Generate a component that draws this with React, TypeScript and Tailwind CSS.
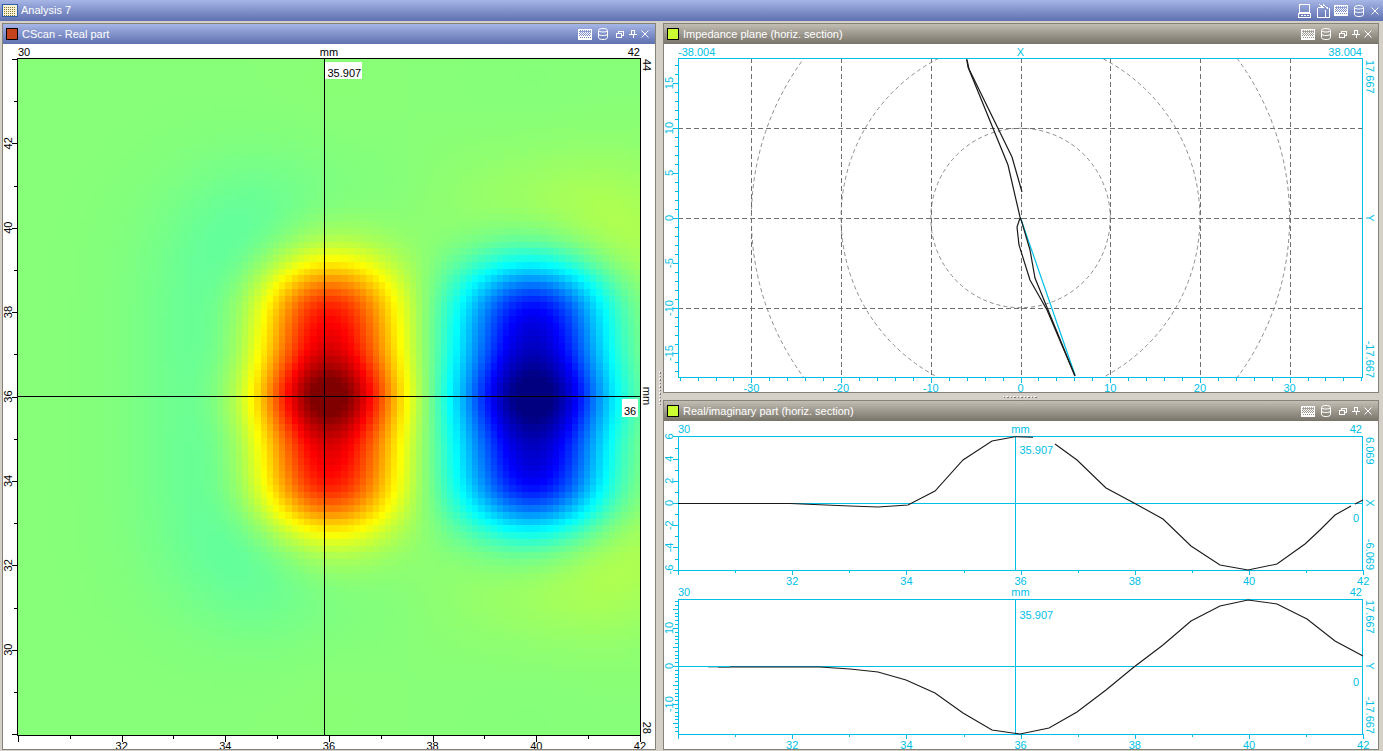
import { useMemo } from 'react'
import type { ReactNode } from 'react'

const CYAN = '#00bfe6'

const clamp = (n: number) => Math.max(0, Math.min(1, n))

// jet colour map, t in 0..1
function jet(t: number) {
  const r = clamp(1.5 - Math.abs(4 * t - 3))
  const g = clamp(1.5 - Math.abs(4 * t - 2))
  const b = clamp(1.5 - Math.abs(4 * t - 1))
  return `rgb(${Math.round(r * 255)},${Math.round(g * 255)},${Math.round(b * 255)})`
}

function lobe(dx: number, dy: number, sx: number, amp: number, coreAmp: number) {
  const gx = Math.exp(-(dx * dx) / (2 * sx * sx))
  const plateau = amp / (1 + Math.pow(Math.abs(dy) / 3.05, 6))
  const core = coreAmp * Math.exp(-(dy * dy) / (2 * 0.62 * 0.62))
  return gx * (plateau + core)
}

// faint opposite sign ring round each lobe, gone well before the plot edges
function halo(dx: number, dy: number, amp: number) {
  return amp * Math.exp(-(dx * dx) / (2 * 1.5 * 1.5) - Math.pow(Math.abs(dy) / 5, 4))
}

function field(x: number, y: number) {
  return (
    0.015 +
    lobe(x - 35.95, y - 36, 0.98, 0.94, 0.28) -
    lobe(x - 40, y - 36, 1.08, 1.12, 0.22) -
    halo(x - 35.3, y - 36, 0.2) +
    halo(x - 40.4, y - 36, 0.28)
  )
}

function Heatmap() {
  const cells = useMemo(() => {
    const out: { key: number; x: number; y: number; fill: string }[] = []
    for (let j = 0; j < 100; j++) {
      for (let i = 0; i < 100; i++) {
        const x = 30 + (i + 0.5) * 0.12
        const y = 44 - (j + 0.5) * 0.16
        out.push({ key: j * 100 + i, x: 18 + i * 6.22, y: 59 + j * 6.76, fill: jet(clamp(0.5 + field(x, y) / 2)) })
      }
    }
    return out
  }, [])
  return (
    <g shapeRendering="crispEdges">
      {cells.map((c) => (
        <rect key={c.key} x={c.x} y={c.y} width={6.8} height={7.3} fill={c.fill} />
      ))}
    </g>
  )
}

// rotated label, dir 1 reads top to bottom, -1 bottom to top
function VText({ x, y, dir, anchor, fill, children }: { x: number; y: number; dir: 1 | -1; anchor?: 'start' | 'middle' | 'end'; fill: string; children: ReactNode }) {
  return (
    <text transform={`translate(${x} ${y}) rotate(${dir * 90})`} textAnchor={anchor ?? 'middle'} fill={fill} className="text-[11px]">
      {children}
    </text>
  )
}

function HText({ x, y, anchor, fill, children }: { x: number; y: number; anchor?: 'start' | 'middle' | 'end'; fill: string; children: ReactNode }) {
  return (
    <text x={x} y={y} textAnchor={anchor ?? 'start'} fill={fill} className="text-[11px]">
      {children}
    </text>
  )
}

const range = (a: number, b: number, step = 1) => {
  const out: number[] = []
  for (let v = a; v <= b; v += step) out.push(v)
  return out
}

function CScan() {
  const px = (mm: number) => 18 + (mm - 30) * 51.83
  const py = (mm: number) => 396.5 - (mm - 36) * 42.2
  return (
    <svg width={652} height={705} viewBox="3 44 652 705" className="block">
      <Heatmap />
      <rect x={17.5} y={58.5} width={623} height={677} fill="none" stroke="#000" />
      <g stroke="#000" shapeRendering="crispEdges">
        {range(30, 42).map((m) => (
          <line key={m} x1={Math.round(px(m)) + 0.5} x2={Math.round(px(m)) + 0.5} y1={736} y2={m % 2 ? 739 : 742} />
        ))}
        {range(28, 44).map((m) => (
          <line key={m} y1={Math.round(py(m)) + 0.5} y2={Math.round(py(m)) + 0.5} x1={m % 2 ? 14 : 12} x2={17} />
        ))}
        <line x1={324.5} x2={324.5} y1={59} y2={735} />
        <line x1={18} x2={640} y1={396.5} y2={396.5} />
      </g>
      <HText x={18} y={56} fill="#000">30</HText>
      <HText x={329} y={56} anchor="middle" fill="#000">mm</HText>
      <HText x={640} y={56} anchor="end" fill="#000">42</HText>
      {[32, 34, 36, 38, 40, 42].map((m) => (
        <HText key={m} x={px(m)} y={750} anchor="middle" fill="#000">{m}</HText>
      ))}
      {[30, 32, 34, 36, 38, 40, 42].map((m) => (
        <VText key={m} x={12} y={py(m)} dir={-1} fill="#000">{m}</VText>
      ))}
      <VText x={643} y={59} dir={1} anchor="start" fill="#000">44</VText>
      <VText x={643} y={396} dir={1} fill="#000">mm</VText>
      <VText x={643} y={734} dir={1} anchor="end" fill="#000">28</VText>
      <rect x={325} y={62} width={37} height={17} fill="#fff" />
      <HText x={327.5} y={77} fill="#000">35.907</HText>
      <rect x={622} y={399} width={16} height={18} fill="#fff" />
      <HText x={630} y={415} anchor="middle" fill="#000">36</HText>
    </svg>
  )
}

function ImpedancePlane() {
  const x = (u: number) => 1020.5 + u * 8.97
  const y = (u: number) => 218 - u * 9
  return (
    <svg width={715} height={348} viewBox="664 44 715 348" className="block">
      <defs>
        <clipPath id="plane">
          <rect x={678} y={58} width={685} height={320} />
        </clipPath>
      </defs>
      <g clipPath="url(#plane)" fill="none">
        <g stroke="#8c8c8c" strokeDasharray="4 3">
          <circle cx={1020.5} cy={218} r={89.7} />
          <circle cx={1020.5} cy={218} r={179.4} />
          <circle cx={1020.5} cy={218} r={269.1} />
        </g>
        <g stroke="#707070" strokeDasharray="5 3" shapeRendering="crispEdges">
          {[-30, -20, -10, 0, 10, 20, 30].map((u) => (
            <line key={u} x1={Math.round(x(u)) + 0.5} x2={Math.round(x(u)) + 0.5} y1={58} y2={378} />
          ))}
          {[-10, 0, 10].map((u) => (
            <line key={u} y1={Math.round(y(u)) + 0.5} y2={Math.round(y(u)) + 0.5} x1={678} x2={1363} />
          ))}
        </g>
        <polyline points="1020.5,218 1075,375" stroke={CYAN} strokeWidth={1.2} />
        <g stroke="#1a1a1a" strokeWidth={1.2}>
          <polyline points="966.5,58 968,67 1008,165 1020,217 1021.5,221 1030,250 1035,278 1075,376" />
          <polyline points="967,60 969,69 1012,157 1022,192" />
          <polyline points="1020,218 1017,227 1019,245 1030,280 1047,310 1075,376" />
        </g>
      </g>
      <rect x={678.5} y={58.5} width={684} height={319} fill="none" stroke={CYAN} />
      <g stroke={CYAN} shapeRendering="crispEdges">
        {range(-38, 38, 2).map((u) => (
          <line key={u} x1={Math.round(x(u)) + 0.5} x2={Math.round(x(u)) + 0.5} y1={378} y2={u % 10 ? 381 : 383} />
        ))}
        {range(-17, 17).map((u) => (
          <line key={u} y1={Math.round(y(u)) + 0.5} y2={Math.round(y(u)) + 0.5} x1={u % 5 ? 675 : 673} x2={678} />
        ))}
      </g>
      <HText x={678} y={55.5} fill={CYAN}>-38.004</HText>
      <HText x={1020.5} y={55.5} anchor="middle" fill={CYAN}>X</HText>
      <HText x={1362} y={55.5} anchor="end" fill={CYAN}>38.004</HText>
      {[-30, -20, -10, 0, 10, 20, 30].map((u) => (
        <HText key={u} x={x(u)} y={392} anchor="middle" fill={CYAN}>{u}</HText>
      ))}
      {[-15, -10, -5, 0, 5, 10, 15].map((u) => (
        <VText key={u} x={673} y={y(u)} dir={-1} fill={CYAN}>{u}</VText>
      ))}
      <VText x={1366} y={60} dir={1} anchor="start" fill={CYAN}>17.667</VText>
      <VText x={1366} y={218} dir={1} fill={CYAN}>Y</VText>
      <VText x={1366} y={378} dir={1} anchor="end" fill={CYAN}>-17.667</VText>
    </svg>
  )
}

type SectionProps = {
  top: number
  bottom: number
  center: number
  unit: number
  ticks: number
  majorEvery: number
  labels: number[]
  curves: string[]
  axis: string
  max: string
  tagY: number
  zeroY: number
}

function Section({ top, bottom, center, unit, ticks, majorEvery, labels, curves, axis, max, tagY, zeroY }: SectionProps) {
  const x = (mm: number) => 678 + (mm - 30) * 57.1
  const y = (u: number) => center - u * unit
  const base = bottom + 15
  return (
    <g>
      <rect x={678.5} y={top + 0.5} width={684} height={bottom - top} fill="none" stroke={CYAN} shapeRendering="crispEdges" />
      <g stroke={CYAN} shapeRendering="crispEdges">
        <line x1={678} x2={1363} y1={center + 0.5} y2={center + 0.5} />
        <line x1={1015.5} x2={1015.5} y1={top} y2={bottom} />
        {range(30, 42).map((m) => (
          <line key={m} x1={Math.round(x(m)) + 0.5} x2={Math.round(x(m)) + 0.5} y1={bottom} y2={m % 2 ? bottom + 3 : bottom + 5} />
        ))}
        {range(-ticks, ticks).map((u) => (
          <line key={u} y1={Math.round(y(u)) + 0.5} y2={Math.round(y(u)) + 0.5} x1={u % majorEvery ? 675 : 673} x2={678} />
        ))}
      </g>
      <g fill="none" stroke="#1a1a1a" strokeWidth={1.1}>
        {curves.map((c) => (
          <polyline key={c} points={c} />
        ))}
      </g>
      <HText x={678} y={top - 3} fill={CYAN}>30</HText>
      <HText x={1020.5} y={top - 3} anchor="middle" fill={CYAN}>mm</HText>
      <HText x={1362} y={top - 3} anchor="end" fill={CYAN}>42</HText>
      {[32, 34, 36, 38, 40, 42].map((m) => (
        <HText key={m} x={x(m)} y={base} anchor="middle" fill={CYAN}>{m}</HText>
      ))}
      {labels.map((u) => (
        <VText key={u} x={673} y={y(u)} dir={-1} fill={CYAN}>{u}</VText>
      ))}
      <HText x={1019.5} y={tagY} fill={CYAN}>35.907</HText>
      <HText x={1353} y={zeroY} fill={CYAN}>0</HText>
      <VText x={1366} y={top + 1} dir={1} anchor="start" fill={CYAN}>{max}</VText>
      <VText x={1366} y={center} dir={1} fill={CYAN}>{axis}</VText>
      <VText x={1366} y={bottom} dir={1} anchor="end" fill={CYAN}>-{max}</VText>
    </g>
  )
}

function Sections() {
  return (
    <svg width={715} height={328} viewBox="664 421 715 328" className="block">
      <Section
        top={436}
        bottom={570}
        center={503}
        unit={11.1}
        ticks={6}
        majorEvery={2}
        labels={[-6, -4, -2, 0, 2, 4, 6]}
        axis="X"
        max="6.069"
        tagY={454}
        zeroY={522}
        curves={[
          '678,503.5 790,503.5 850,506 878,507 908,505 935,491 963,460 992,441 1015,436.7 1033,437.3',
          '1055,444 1077,460 1106,488 1134,503 1163,519 1191,546 1220,565 1248,570 1277,564 1305,544 1320,530 1335,515 1351,506',
          '1355,504 1363,500',
        ]}
      />
      <Section
        top={599}
        bottom={734}
        center={666}
        unit={3.81}
        ticks={17}
        majorEvery={5}
        labels={[-10, 0, 10]}
        axis="Y"
        max="17.667"
        tagY={619}
        zeroY={686}
        curves={[
          '730,667 820,667 850,669 878,672 906,680 935,693 963,713 992,730 1020,734 1049,728 1077,712 1106,690 1134,667 1163,645 1191,621 1220,606 1248,600 1277,604 1307,619 1335,641 1363,656',
        ]}
      />
      {/* the lower curve fades in from the left */}
      <line x1={708} x2={718} y1={667.5} y2={667.5} stroke="#bdbdbd" />
      <line x1={718} x2={730} y1={667.5} y2={667.5} stroke="#6e6e6e" />
    </svg>
  )
}

// dithered thumbnail, thin at the top and nearly solid at the bottom
function PictureIcon() {
  const dots: { x: number; y: number }[] = []
  for (let r = 0; r < 9; r++) {
    for (let c = 0; c < 12; c++) {
      const on = r < 3 ? r % 2 === 0 && c % 2 === 0 : r < 6 ? (r + c) % 2 === 0 : r % 2 === 0 || c % 2 === 0
      if (on) dots.push({ x: c + 1, y: r + 1 })
    }
  }
  return (
    <svg width={14} height={11} viewBox="0 0 14 11" className="block" shapeRendering="crispEdges">
      <rect x={0.5} y={0.5} width={13} height={10} fill="none" stroke="#fff" />
      {dots.map((d) => (
        <rect key={`${d.x}-${d.y}`} x={d.x} y={d.y} width={1} height={1} fill="#fff" />
      ))}
    </svg>
  )
}

function DbIcon() {
  return (
    <svg width={10} height={12} viewBox="0 0 10 12" fill="none" stroke="#fff" className="block">
      <path d="M0.5 2.5c0-2.7 9-2.7 9 0v7c0 2.7-9 2.7-9 0z" />
      <path d="M0.5 2.5c0 2 9 2 9 0M0.5 6c0 2 9 2 9 0" />
    </svg>
  )
}

function CloseIcon() {
  return (
    <svg width={8} height={8} viewBox="0 0 8 8" fill="none" stroke="#fff" className="block">
      <path d="M0.5 0.5l7 7M7.5 0.5l-7 7" />
    </svg>
  )
}

function Panel({ title, swatch, blue, children, className }: { title: string; swatch: string; blue?: boolean; children: ReactNode; className?: string }) {
  return (
    <div className={`flex flex-col border border-[#85827a] bg-white ${className ?? ''}`}>
      <div
        className={`flex h-5 shrink-0 items-center bg-linear-to-b pl-[3px] pr-[6px] text-[11px] text-white ${
          blue ? 'from-[#a6b6e6] to-[#5f70b0]' : 'from-[#c2beb4] to-[#78746a]'
        }`}
      >
        <span className={`mr-1 block size-[12px] border border-black ${swatch}`} />
        <span>{title}</span>
        <div className="ml-auto flex items-center">
          <PictureIcon />
          <span className="ml-[6px]">
            <DbIcon />
          </span>
          <svg width={8} height={7} viewBox="0 0 8 7" fill="none" stroke="#fff" className="ml-2 block" shapeRendering="crispEdges">
            <rect x={0.5} y={2.5} width={5} height={4} />
            <path d="M2.5 2.5v-2h5v4h-2" />
          </svg>
          <svg width={8} height={8} viewBox="0 0 8 8" fill="none" stroke="#fff" className="ml-[5px] block" shapeRendering="crispEdges">
            <path d="M2.5 0.5h3v4h-3zM0 4.5h8M4 4.5v3.5" />
          </svg>
          <span className="ml-1">
            <CloseIcon />
          </span>
        </div>
      </div>
      <div className="min-h-0 flex-1 overflow-hidden">{children}</div>
    </div>
  )
}

function Grip({ vertical }: { vertical?: boolean }) {
  return (
    <div className={vertical ? 'flex flex-col gap-[2px]' : 'flex gap-[2px]'}>
      {range(1, 10).map((n) => (
        <span key={n} className="block size-[1.5px] bg-[#fff] shadow-[1px_1px_0_#777]" />
      ))}
    </div>
  )
}

export default function App() {
  return (
    <div className="flex h-[751px] w-[1383px] flex-col overflow-hidden bg-[#d4d0c8] font-['Liberation_Sans',Arial,sans-serif]">
      <div className="flex h-[21px] shrink-0 items-center bg-linear-to-b from-[#a6b6e6] to-[#5f70b0] pl-[2px] pr-1 text-[11px] text-white">
        <svg width={16} height={13} viewBox="0 0 16 13" className="mr-[3px] block" shapeRendering="crispEdges">
          <rect x={0.5} y={0.5} width={15} height={12} fill="#f7f1d8" stroke="#2f5ea8" />
          <path d="M2 3h12M2 5h12M2 7h12M2 9h12M2 11h12" stroke="#8a7a30" strokeDasharray="1 1" />
        </svg>
        <span>Analysis 7</span>
        <div className="ml-auto flex items-center">
          <svg width={13} height={14} viewBox="0 0 13 14" fill="none" stroke="#fff" className="block" shapeRendering="crispEdges">
            <rect x={1.5} y={0.5} width={10} height={8} />
            <rect x={0.5} y={9.5} width={12} height={4} />
            <path d="M3 11.5h2M6 11.5h2M9 11.5h2" />
          </svg>
          <svg width={13} height={14} viewBox="0 0 13 14" fill="none" stroke="#fff" className="ml-[6px] block" shapeRendering="crispEdges">
            <path d="M0.5 3.5h5M8.5 5.5v8h-8v-10M12.5 3.5v10h-4M2 0.5l5 3M6 0.5l5 4" />
          </svg>
          <span className="ml-1">
            <PictureIcon />
          </span>
          <span className="ml-[6px]">
            <DbIcon />
          </span>
          <span className="ml-[7px]">
            <CloseIcon />
          </span>
        </div>
      </div>
      <div className="flex min-h-0 flex-1 pb-px pl-[2px] pr-1 pt-[2px]">
        <Panel title="CScan - Real part" swatch="bg-[#c4421c]" blue className="w-[654px]">
          <CScan />
        </Panel>
        <div className="flex w-[7px] items-center justify-center pt-[2px]">
          <Grip vertical />
        </div>
        <div className="flex min-w-0 flex-1 flex-col">
          <Panel title="Impedance plane (horiz. section)" swatch="bg-[#ccff33]" className="h-[370px]">
            <ImpedancePlane />
          </Panel>
          <div className="flex h-[7px] shrink-0 items-center justify-center pr-[4px]">
            <Grip />
          </div>
          <Panel title="Real/imaginary part (horiz. section)" swatch="bg-[#ccff33]" className="min-h-0 flex-1">
            <Sections />
          </Panel>
        </div>
      </div>
    </div>
  )
}
